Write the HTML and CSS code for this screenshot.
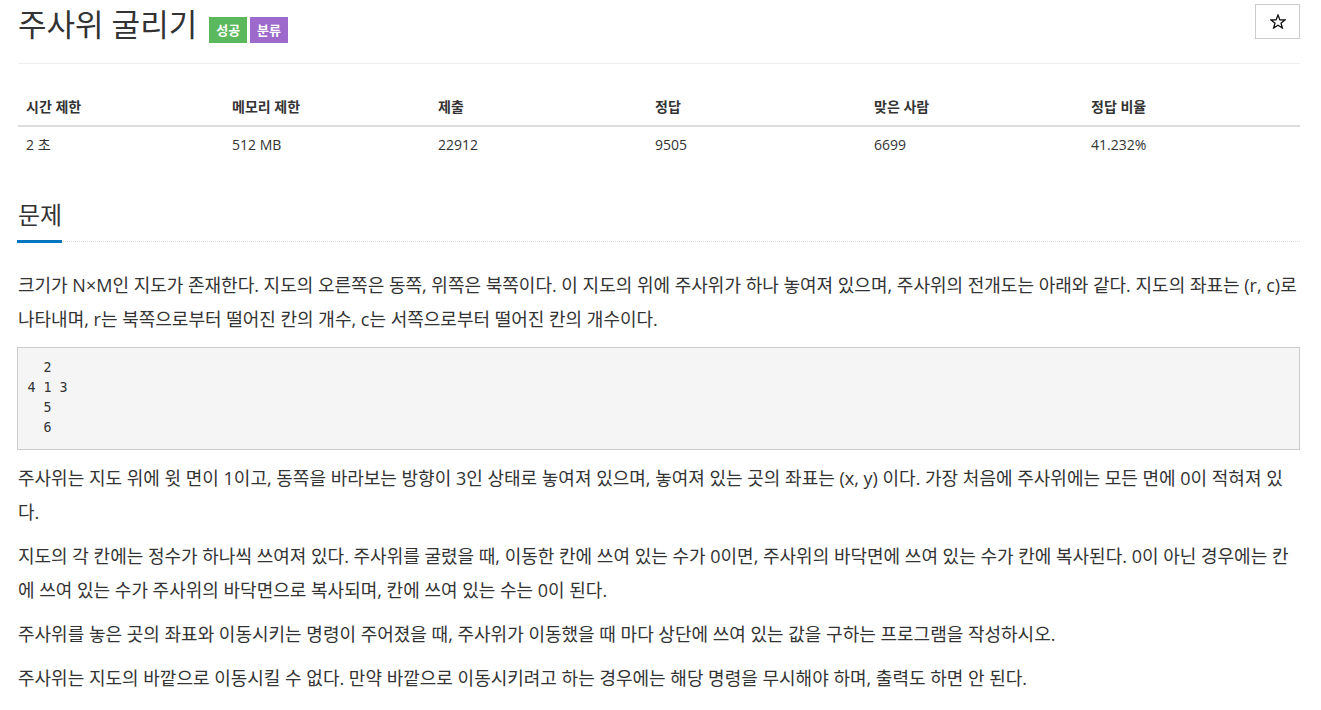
FILE: index.html
```html
<!DOCTYPE html>
<html lang="ko">
<head>
<meta charset="utf-8">
<title>주사위 굴리기</title>
<link rel="stylesheet" href="styles.css">
</head>
<body>
<div class="container">
  <div class="page-header">
    <div class="title-wrap">
      <h1 class="title">주사위 굴리기</h1>
      <div class="labels">
        <span class="label label-success">성공</span>
        <span class="label label-purple">분류</span>
      </div>
    </div>
    <button class="star-btn" type="button" aria-label="즐겨찾기">
      <svg class="star-icon" width="16" height="15" viewBox="0 0 16 15" aria-hidden="true">
        <polygon points="8,1 9.9,5.9 15,6 11,9.2 12.4,14 8,11.2 3.6,14 5,9.2 1,6 6.1,5.9" fill="none" stroke="#111" stroke-width="1.3" stroke-linejoin="miter"/>
      </svg>
    </button>
  </div>

  <table class="info-table">
    <colgroup>
      <col class="w1"><col class="w2"><col class="w3"><col class="w4"><col class="w5"><col class="w6">
    </colgroup>
    <thead>
      <tr><th>시간 제한</th><th>메모리 제한</th><th>제출</th><th>정답</th><th>맞은 사람</th><th>정답 비율</th></tr>
    </thead>
    <tbody>
      <tr><td>2 초</td><td>512 MB</td><td>22912</td><td>9505</td><td>6699</td><td>41.232%</td></tr>
    </tbody>
  </table>

  <section class="problem-section">
    <div class="section-head"><h2 class="section-title">문제</h2></div>
    <div class="problem-text">
      <p>크기가 N×M인 지도가 존재한다. 지도의 오른쪽은 동쪽, 위쪽은 북쪽이다. 이 지도의 위에 주사위가 하나 놓여져 있으며, 주사위의 전개도는 아래와 같다. 지도의 좌표는 (r, c)로 나타내며, r는 북쪽으로부터 떨어진 칸의 개수, c는 서쪽으로부터 떨어진 칸의 개수이다.</p>
<pre class="dice">  2
4 1 3
  5
  6</pre>
      <p>주사위는 지도 위에 윗 면이 1이고, 동쪽을 바라보는 방향이 3인 상태로 놓여져 있으며, 놓여져 있는 곳의 좌표는 (x, y) 이다. 가장 처음에 주사위에는 모든 면에 0이 적혀져 있다.</p>
      <p>지도의 각 칸에는 정수가 하나씩 쓰여져 있다. 주사위를 굴렸을 때, 이동한 칸에 쓰여 있는 수가 0이면, 주사위의 바닥면에 쓰여 있는 수가 칸에 복사된다. 0이 아닌 경우에는 칸에 쓰여 있는 수가 주사위의 바닥면으로 복사되며, 칸에 쓰여 있는 수는 0이 된다.</p>
      <p>주사위를 놓은 곳의 좌표와 이동시키는 명령이 주어졌을 때, 주사위가 이동했을 때 마다 상단에 쓰여 있는 값을 구하는 프로그램을 작성하시오.</p>
      <p>주사위는 지도의 바깥으로 이동시킬 수 없다. 만약 바깥으로 이동시키려고 하는 경우에는 해당 명령을 무시해야 하며, 출력도 하면 안 된다.</p>
    </div>
  </section>
</div>
</body>
</html>
```

FILE: styles.css
```css
* { box-sizing: border-box; }
html, body { margin: 0; padding: 0; background: #fff; }
body {
  font-family: "Open Sans", "Noto Sans CJK KR", sans-serif;
  color: #333;
  font-size: 14px;
  line-height: 20px;
}
.container { padding: 0 21px 0 18px; }

.page-header {
  display: flex;
  justify-content: space-between;
  align-items: flex-start;
  padding-top: 4px;
  height: 64px;
  border-bottom: 1px solid #eee;
}
.title-wrap { display: flex; align-items: flex-start; }
.title {
  margin: 0;
  font-size: 31px;
  line-height: 40px;
  font-weight: 400;
  color: #333;
}
.labels { display: flex; gap: 3px; margin-top: 13px; margin-left: 12px; }
.label {
  display: inline-block;
  height: 26px;
  padding: 0 7px;
  font-size: 13px;
  line-height: 26px;
  font-weight: 700;
  color: #fff;
}
.label-success { background: #5cb85c; }
.label-purple { background: #9d69ca; }

.star-btn {
  display: flex;
  align-items: center;
  justify-content: center;
  width: 45px;
  height: 35px;
  border: 1px solid #ccc;
  background: #fff;
  padding: 0;
}
.star-icon { display: block; }

.info-table {
  width: 100%;
  border-collapse: collapse;
  margin-top: 25px;
  table-layout: fixed;
}
.w1 { width: 206px; }
.w2 { width: 206px; }
.w3 { width: 217px; }
.w4 { width: 219px; }
.w5 { width: 217px; }
.info-table th, .info-table td {
  text-align: left;
  padding: 8px 8px;
  line-height: 20px;
}
.info-table th { font-weight: 700; border-bottom: 2px solid #ddd; }

.problem-section { margin-top: 38px; }
.section-head { border-bottom: 1px dotted #ddd; }
.section-title {
  display: inline-block;
  margin: 0 0 -2px -1px;
  padding: 0 0 11px 1px;
  font-size: 24px;
  line-height: 28px;
  font-weight: 400;
  color: #333;
  border-bottom: 3px solid #0076c0;
}

.problem-text { padding-top: 26px; }
.problem-text p {
  margin: 0 0 10px;
  font-size: 18px;
  line-height: 34px;
  color: #333;
}
.problem-text p:first-child { margin-bottom: 11px; }
.dice {
  margin: 0 0 11px -1px;
  padding: 10px 9.5px 11px;
  background: #f5f5f5;
  border: 1px solid #ccc;
  font-family: "DejaVu Sans Mono", monospace;
  font-size: 13.3px;
  line-height: 20px;
  color: #333;
}
```
